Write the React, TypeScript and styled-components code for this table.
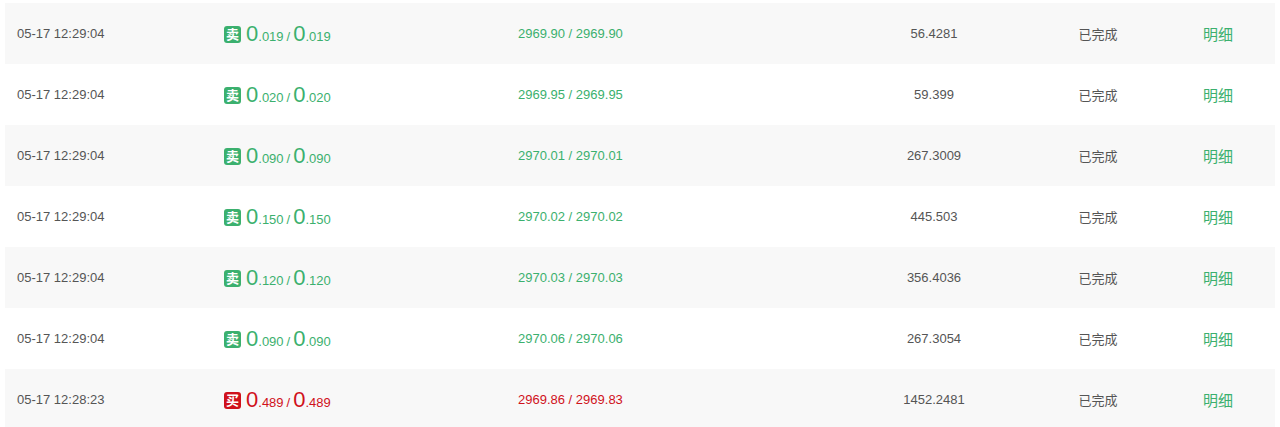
import React from 'react';
import styled, { createGlobalStyle } from 'styled-components';

const GlobalStyle = createGlobalStyle`
  html, body {
    margin: 0;
    padding: 0;
    background: #fff;
    font-family: "Liberation Sans", "Noto Sans CJK SC", sans-serif;
  }
`;

const GREEN = '#3bb06e';
const RED = '#d0111b';

interface Order {
  time: string;
  side: 'buy' | 'sell';
  amount: string;
  filled: string;
  price: string;
  avg: string;
  total: string;
}

const orders: Order[] = [
  { time: '05-17 12:29:04', side: 'sell', amount: '019', filled: '019', price: '2969.90', avg: '2969.90', total: '56.4281' },
  { time: '05-17 12:29:04', side: 'sell', amount: '020', filled: '020', price: '2969.95', avg: '2969.95', total: '59.399' },
  { time: '05-17 12:29:04', side: 'sell', amount: '090', filled: '090', price: '2970.01', avg: '2970.01', total: '267.3009' },
  { time: '05-17 12:29:04', side: 'sell', amount: '150', filled: '150', price: '2970.02', avg: '2970.02', total: '445.503' },
  { time: '05-17 12:29:04', side: 'sell', amount: '120', filled: '120', price: '2970.03', avg: '2970.03', total: '356.4036' },
  { time: '05-17 12:29:04', side: 'sell', amount: '090', filled: '090', price: '2970.06', avg: '2970.06', total: '267.3054' },
  { time: '05-17 12:28:23', side: 'buy', amount: '489', filled: '489', price: '2969.86', avg: '2969.83', total: '1452.2481' },
];

const Table = styled.div`
  padding: 3px 5px 0 5px;
`;

const Row = styled.div<{ $striped: boolean }>`
  display: grid;
  grid-template-columns: 207px 294px 302px 228px 100px 1fr;
  align-items: center;
  height: 61px;
  padding-left: 12px;
  background: ${p => (p.$striped ? '#f8f8f8' : '#fff')};
  font-size: 13px;
  color: #555;
`;

const Cell = styled.div<{ $align?: 'left' | 'center' }>`
  text-align: ${p => p.$align || 'left'};
  white-space: nowrap;
`;

const SideCell = styled.div<{ $color: string }>`
  display: flex;
  align-items: baseline;
  color: ${p => p.$color};
  white-space: nowrap;
`;

const Badge = styled.span<{ $color: string }>`
  display: inline-flex;
  align-items: center;
  justify-content: center;
  width: 17px;
  height: 17px;
  border-radius: 3px;
  background: ${p => p.$color};
  color: #fff;
  font-size: 13px;
  font-weight: bold;
  line-height: 1;
  margin-right: 5px;
  align-self: center;
  position: relative;
  top: 1px;
`;

const Big = styled.span`
  font-size: 22px;
`;

const Small = styled.span`
  font-size: 13px;
`;

const Slash = styled.span`
  font-size: 13px;
  margin: 0 3px;
`;

const Price = styled.div<{ $color: string }>`
  color: ${p => p.$color};
  white-space: nowrap;
`;

const Detail = styled.a`
  color: ${GREEN};
  font-size: 15px;
  padding-left: 55px;
  cursor: pointer;
  text-decoration: none;
`;

export default function App() {
  return (
    <>
      <GlobalStyle />
      <Table>
        {orders.map((o, i) => {
          const color = o.side === 'buy' ? RED : GREEN;
          return (
            <Row key={i} $striped={i % 2 === 0}>
              <Cell>{o.time}</Cell>
              <SideCell $color={color}>
                <Badge $color={color}>{o.side === 'buy' ? '买' : '卖'}</Badge>
                <Big>0</Big>
                <Small>.{o.amount}</Small>
                <Slash>/</Slash>
                <Big>0</Big>
                <Small>.{o.filled}</Small>
              </SideCell>
              <Price $color={color}>
                {o.price} / {o.avg}
              </Price>
              <Cell $align="center">{o.total}</Cell>
              <Cell $align="center">已完成</Cell>
              <Detail>明细</Detail>
            </Row>
          );
        })}
      </Table>
    </>
  );
}
